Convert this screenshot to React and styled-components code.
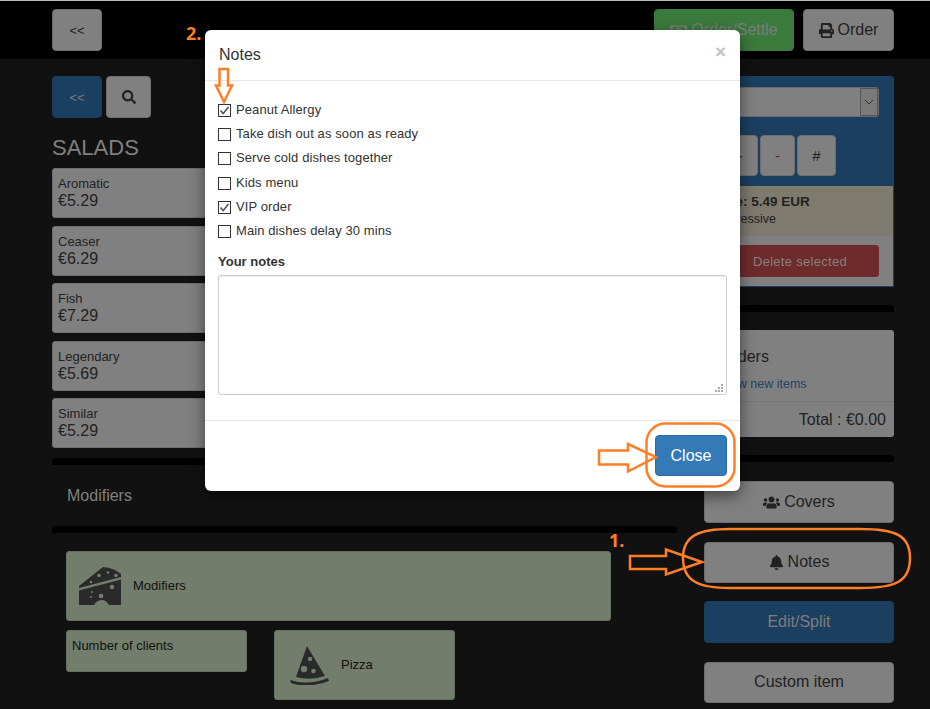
import React from "react";
import styled, { createGlobalStyle } from "styled-components";
import { FaSearch, FaPrint, FaUsers, FaBell, FaRegMoneyBillAlt } from "react-icons/fa";

const Global = createGlobalStyle`
  html, body { margin: 0; padding: 0; background: #111; }
  * { box-sizing: border-box; }
  body { font-family: "Liberation Sans", Arial, sans-serif; color: #222; overflow: hidden; }
`;

const Page = styled.div`
  position: relative;
  width: 930px;
  height: 709px;
  overflow: hidden;
  background: #111;
  border-top: 1px solid #bbb;
`;
const TopBar = styled.header`
  height: 58px;
  background: #000;
  display: flex;
  align-items: center;
  padding: 0 36px 0 52px;
  gap: 9px;
`;
const Spacer = styled.div`flex: 1;`;
const Btn = styled.button`
  font: inherit;
  font-size: ${(p) => p.$fs || 16}px;
  height: ${(p) => p.$h || 42}px;
  width: ${(p) => (p.$w ? p.$w + "px" : "100%")};
  flex: none;
  border-radius: 4px;
  border: 1px solid ${(p) => ({ blue: "#1a3d5a", green: "#3a7a3c" }[p.$tone] || "#6e6e6e")};
  background: ${(p) => ({ blue: "#1b3f60", green: "#3a7a3c" }[p.$tone] || "#808080")};
  color: ${(p) => (p.$tone ? "#7d7d7d" : "#222")};
  display: flex;
  align-items: center;
  justify-content: center;
  gap: 4px;
  padding: 0;
`;
const Main = styled.main`
  display: grid;
  grid-template-columns: 625px 190px;
  column-gap: 27px;
  padding: 17px 0 0 52px;
`;
const LeftCol = styled.section`display: flex; flex-direction: column;`;
const RightCol = styled.aside`display: flex; flex-direction: column;`;
const ToolRow = styled.div`display: flex; gap: 4px;`;
const Heading = styled.h2`
  margin: 17px 0 8px;
  font-size: 22px;
  line-height: 25px;
  font-weight: 400;
  color: #808080;
`;
const DishList = styled.div`display: flex; flex-direction: column; gap: 7.5px;`;
const Dish = styled.div`
  width: 190px;
  height: 50px;
  background: #808080;
  border: 1px solid #6e6e6e;
  border-radius: 3px;
  padding: 7px 5px;
  font-size: 13px;
  line-height: 16px;
  strong { display: block; font-weight: 400; font-size: 16px; line-height: 18px; }
`;
const Rule = styled.div`
  height: 7px;
  background: #000;
  border-radius: 4px 4px 0 0;
  margin: ${(p) => p.$m || "18px 0"};
`;
const SectionTitle = styled.div`
  padding: 0 15px;
  height: 61px;
  display: flex;
  align-items: center;
  font-size: 16px;
  color: #808080;
`;
const ModGrid = styled.div`
  display: flex;
  flex-wrap: wrap;
  align-items: flex-start;
  gap: 9px 27px;
  padding: 18px 0 0 14px;
`;
const ModCard = styled.div`
  width: ${(p) => p.$w}px;
  height: ${(p) => p.$h}px;
  background: #727d6c;
  border: 1px solid #66705f;
  border-radius: 3px;
  display: flex;
  align-items: ${(p) => (p.$top ? "flex-start" : "center")};
  padding: ${(p) => p.$pad || "0"};
  gap: ${(p) => p.$gap || 0}px;
  font-size: 13px;
  line-height: 16px;
  color: #111;
`;
const Panel = styled.div`
  height: 211px;
  border: 1px solid #1b3f60;
  border-radius: 3px 3px 0 0;
  background: #808080;
  display: flex;
  flex-direction: column;
`;
const PanelTop = styled.div`
  background: #1b3f60;
  height: 109px;
  padding: 10px 14px 0;
`;
const FakeSelect = styled.div`
  height: 30px;
  background: #808080;
  border: 1px solid #6a6a6a;
  border-radius: 3px;
  display: flex;
  justify-content: flex-end;
`;
const SelectArrow = styled.span`
  width: 18px;
  background: #7a7a7a;
  border: 1px solid #555;
  display: flex;
  align-items: center;
  justify-content: center;
`;
const QtyRow = styled.div`
  display: flex;
  gap: 2px;
  margin-top: 18px;
`;
const Note = styled.div`
  height: 50px;
  background: #7f7a6e;
  border-bottom: 1px solid #777;
  padding: 7px 0 0 5px;
  font-size: 12.5px;
  line-height: 17px;
  b { display: block; font-size: 13.5px; line-height: 18px; }
`;
const PanelBottom = styled.div`padding: 9px 14px;`;
const DangerBtn = styled.button`
  width: 100%;
  height: 32px;
  font: inherit;
  font-size: 13px;
  background: #6e2b2b;
  border: 1px solid #6e2b2b;
  border-radius: 3px;
  color: #8a7f7f;
  letter-spacing: .3px;
  padding: 0 0 0 2px;
`;
const Orders = styled.div`
  height: 107px;
  background: #808080;
  border-radius: 3px;
  display: flex;
  flex-direction: column;
`;
const OrdersBody = styled.div`
  height: 72px;
  padding: 18px 0 0 16px;
  border-bottom: 1px solid #757575;
  font-size: 16px;
  line-height: 18px;
  a { display: block; margin-top: 10px; font-size: 12.5px; line-height: 16px; color: #1e4468; }
`;
const OrdersTotal = styled.div`
  flex: 1;
  display: flex;
  align-items: center;
  justify-content: flex-end;
  padding: 0 8px;
  font-size: 16px;
`;
const Stack = styled.div`
  display: flex;
  flex-direction: column;
  gap: 18.5px;
  margin-top: 1px;
`;
const Modal = styled.div`
  position: absolute;
  left: 205px;
  top: 29px;
  width: 535px;
  height: 461px;
  background: #fff;
  border-radius: 6px;
  box-shadow: 0 5px 15px rgba(0,0,0,.5);
  display: flex;
  flex-direction: column;
`;
const ModalHeader = styled.div`
  height: 51px;
  border-bottom: 1px solid #e5e5e5;
  display: flex;
  justify-content: space-between;
  padding: 15px 14px 0;
`;
const ModalTitle = styled.h4`
  margin: 0;
  font-size: 16px;
  line-height: 19px;
  font-weight: 400;
  color: #333;
`;
const CloseX = styled.span`
  font-size: 19px;
  font-weight: 700;
  line-height: 13px;
  color: #c4c4c4;
  margin-top: 0;
  padding-right: 0;
`;
const ModalBody = styled.div`
  height: 340px;
  border-bottom: 1px solid #e5e5e5;
  padding: 16.5px 13px 0;
`;
const CheckRow = styled.label`
  display: flex;
  align-items: center;
  gap: 5px;
  height: 24.2px;
  font-size: 13px;
  letter-spacing: .1px;
  color: #333;
`;
const Box = styled.span`
  width: 13px;
  height: 13px;
  margin-top: 2px;
  flex: none;
  border: 1px solid #333;
  background: #fff;
  display: flex;
  align-items: center;
  justify-content: center;
  position: relative;
  outline: ${(p) => (p.$focus ? "1px dotted #333" : "none")};
  outline-offset: -1px;
`;
const NotesLabel = styled.div`
  margin: 11px 0 5px;
  font-size: 13px;
  line-height: 16px;
  font-weight: 700;
  color: #333;
`;
const TextBox = styled.div`
  position: relative;
  width: 509px;
  height: 120px;
  border: 1px solid #ccc;
  border-radius: 3px;
  box-shadow: inset 0 1px 1px rgba(0,0,0,.075);
`;
const Grip = styled.svg`
  position: absolute;
  right: 2px;
  bottom: 2px;
`;
const ModalFooter = styled.div`
  flex: 1;
  display: flex;
  justify-content: flex-end;
  align-items: flex-start;
  padding: 14px 13px 0;
`;
const PrimaryBtn = styled.button`
  width: 72px;
  height: 41px;
  font: inherit;
  font-size: 16px;
  color: #fff;
  background: #337ab7;
  border: 1px solid #2e6da4;
  border-radius: 4px;
  padding: 0;
`;
const Marks = styled.svg`
  position: absolute;
  left: 0;
  top: -1px;
  pointer-events: none;
`;
const Step = styled.span`
  position: absolute;
  left: ${(p) => p.$x}px;
  top: ${(p) => p.$y}px;
  font-family: "Open Sans", sans-serif;
  font-size: 18px;
  line-height: 22px;
  font-weight: 700;
  color: #ff7f27;
`;

const Tick = () => (
  <svg width="11" height="11" viewBox="0 0 11 11">
    <path d="M1.5 5.5 L4.2 8.5 L9.5 2" fill="none" stroke="#555" strokeWidth="1.6" />
  </svg>
);

const Cheese = () => (
  <svg width="43" height="38" viewBox="0 0 43 38">
    <path d="M0 19 L24 0 Q35 1 42 7 L42 10 L0 21 Z" fill="#2a2a2a" />
    <path d="M0 23.5 L42 12.5 V38 H30 Q27 33 23 33 Q18 33 15 38 H0 Z" fill="#2a2a2a" />
    <g fill="#727d6c">
      <circle cx="20" cy="8.5" r="1.8" /><circle cx="29" cy="5.5" r="1.3" /><circle cx="37" cy="8.5" r="1.8" />
      <circle cx="12" cy="15" r="1.2" /><circle cx="33" cy="20" r="2.2" /><circle cx="22" cy="29" r="2.3" />
      <circle cx="13" cy="25" r="1" /><circle cx="12" cy="30" r="1" />
    </g>
  </svg>
);

const Pizza = () => (
  <svg width="39" height="39" viewBox="0 0 39 39">
    <path d="M17 0 L35 30 Q20 35 6 31 Z" fill="#2a2a2a" />
    <path d="M0 34 Q18 40 38 32 L39 35 Q18 43 1 37 Z" fill="#2a2a2a" />
    <g fill="#727d6c">
      <circle cx="20" cy="13" r="2.2" /><circle cx="14" cy="23" r="3.2" /><circle cx="23.500" cy="25" r="2.300" />
    </g>
  </svg>
);

const options = [
  ["Peanut Allergy", true],
  ["Take dish out as soon as ready"],
  ["Serve cold dishes together"],
  ["Kids menu"],
  ["VIP order", true, true],
  ["Main dishes delay 30 mins"],
];

const dishes = [
  ["Aromatic", "€5.29"],
  ["Ceaser", "€6.29"],
  ["Fish", "€7.29"],
  ["Legendary", "€5.69"],
  ["Similar", "€5.29"],
];

export default function App() {
  return (
    <Page>
      <Global />
      <TopBar>
        <Btn $w={50} $fs={13}>&lt;&lt;</Btn>
        <Spacer />
        <Btn $w={140} $tone="green"><FaRegMoneyBillAlt size={17} />Order/Settle</Btn>
        <Btn $w={91}><FaPrint size={15} />Order</Btn>
      </TopBar>
      <Main>
        <LeftCol>
          <ToolRow>
            <Btn $w={50} $fs={13} $tone="blue">&lt;&lt;</Btn>
            <Btn $w={45}><FaSearch size={14} /></Btn>
          </ToolRow>
          <Heading>SALADS</Heading>
          <DishList>
            {dishes.map(([n, p]) => (
              <Dish key={n}>{n}<strong>{p}</strong></Dish>
            ))}
          </DishList>
          <Rule $m="10px 0 0" />
          <SectionTitle>Modifiers</SectionTitle>
          <Rule $m="0" />
          <ModGrid>
            <ModCard $w={545} $h={70} $pad="0 0 0 12px" $gap={11}><Cheese />Modifiers</ModCard>
            <ModCard $w={181} $h={42} $top $pad="7px 5px">Number of clients</ModCard>
            <ModCard $w={181} $h={70} $pad="0 0 0 15px" $gap={12}><Pizza />Pizza</ModCard>
          </ModGrid>
        </LeftCol>
        <RightCol>
          <Panel>
            <PanelTop>
              <FakeSelect>
                <SelectArrow>
                  <svg width="10" height="6" viewBox="0 0 10 6"><path d="M1 1 L5 5 L9 1" fill="none" stroke="#333" strokeWidth="1" /></svg>
                </SelectArrow>
              </FakeSelect>
              <QtyRow>
                <Btn $w={39} $h={41} $fs={15}>+</Btn>
                <Btn $w={35} $h={41} $fs={15}><span style={{ color: "#6e1f1f" }}>-</span></Btn>
                <Btn $w={39} $h={41} $fs={15}>#</Btn>
              </QtyRow>
            </PanelTop>
            <Note><b>Price: 5.49 EUR</b>Progressive</Note>
            <PanelBottom><DangerBtn>Delete selected</DangerBtn></PanelBottom>
          </Panel>
          <Rule />
          <Orders>
            <OrdersBody>Orders<a>View new items</a></OrdersBody>
            <OrdersTotal>Total : €0.00</OrdersTotal>
          </Orders>
          <Rule />
          <Stack>
            <Btn><FaUsers size={17} />Covers</Btn>
            <Btn $h={41}><FaBell size={15} />Notes</Btn>
            <Btn $tone="blue">Edit/Split</Btn>
            <Btn $h={41}>Custom item</Btn>
          </Stack>
        </RightCol>
      </Main>
      <Modal>
        <ModalHeader>
          <ModalTitle>Notes</ModalTitle>
          <CloseX>×</CloseX>
        </ModalHeader>
        <ModalBody>
          {options.map(([t, on, focus]) => (
            <CheckRow key={t}>
              <Box $focus={focus}>{on && <Tick />}</Box>
              {t}
            </CheckRow>
          ))}
          <NotesLabel>Your notes</NotesLabel>
          <TextBox>
            <Grip width="9" height="9" viewBox="0 0 9 9">
              <g fill="#aaa">
                <rect x="6" y="1" width="2" height="2" /><rect x="3" y="4" width="2" height="2" /><rect x="6" y="4" width="2" height="2" />
                <rect x="0" y="7" width="2" height="2" /><rect x="3" y="7" width="2" height="2" /><rect x="6" y="7" width="2" height="2" />
              </g>
            </Grip>
          </TextBox>
        </ModalBody>
        <ModalFooter>
          <PrimaryBtn>Close</PrimaryBtn>
        </ModalFooter>
      </Modal>
      <Marks width="930" height="709" viewBox="0 0 930 709" fill="none" stroke="#ff7f27" strokeWidth="2.5">
        <path d="M219.500 69 H228 V85.500 H232 L224 102 L216 85.500 H219.500 Z" />
        <path d="M599 450.500 H628 V444 L656 457 L628 471.500 V464.500 H599 Z" />
        <path d="M630 556 H666 V549.500 L702 562 L666 574.500 V569 H630 Z" />
        <rect x="646.500" y="423.500" width="88" height="63" rx="19" ry="19" />
        <path d="M683 558 C683 535 700 529 730 529 H860 C895 529 910 535 910 558 C910 582 895 588 860 588 H730 C700 588 683 582 683 558 Z" />
      </Marks>
      <Step $x={186} $y={21}>2.</Step>
      <Step $x={609} $y={528}>1.</Step>
    </Page>
  );
}
